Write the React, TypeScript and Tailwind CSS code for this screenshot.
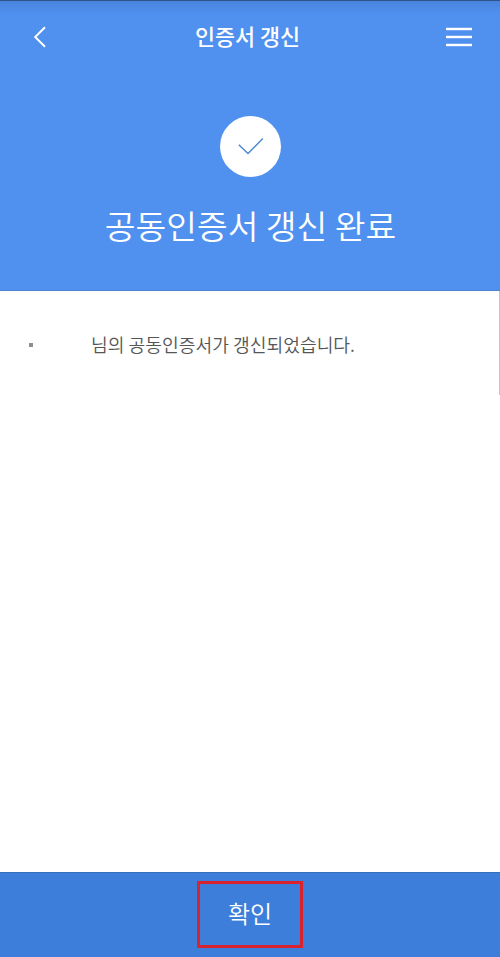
const menuLines = [0, 1, 2]

function Header() {
  return (
    <header className="flex h-[71px] items-center justify-between pr-[28px] pl-[33px]">
      <button type="button" aria-label="뒤로" className="w-[27px]">
        <svg width="14" height="22" viewBox="0 0 14 22" fill="none" stroke="white" strokeWidth="2">
          <path d="M12 1.3 2.2 11 12 20.7" />
        </svg>
      </button>
      <h1 className="mr-[11px] pb-[2px] text-[21.8px] leading-8 font-medium whitespace-nowrap">
        인증서 갱신
      </h1>
      <button type="button" aria-label="메뉴" className="w-[26px]">
        <svg width="26" height="20" viewBox="0 0 26 20" stroke="white" strokeWidth="2.4">
          {menuLines.map((line) => (
            <path key={line} d={`M0 ${2 + line * 8}h26`} />
          ))}
        </svg>
      </button>
    </header>
  )
}

function CheckBadge() {
  return (
    <div className="flex h-[61px] w-[61px] items-center justify-center rounded-full bg-white">
      <svg width="61" height="61" viewBox="0 0 61 61" fill="none" stroke="#4a88d0" strokeWidth="1.4">
        <path d="M18.8 28.7 28 37.6 42.8 22.4" />
      </svg>
    </div>
  )
}

export default function App() {
  return (
    <div className="relative flex h-[957px] w-[500px] flex-col overflow-hidden bg-white font-['Noto_Sans_CJK_KR',sans-serif]">
      <section className="h-[291px] border-t border-b border-t-[#2f5487] border-b-[#4b82cf] bg-[#5091f0] text-white">
        <div className="bg-linear-to-b from-[#4884dc] to-[#5091f0] to-20%">
          <Header />
        </div>
        <div className="flex flex-col items-center pt-[44px]">
          <CheckBadge />
          <h2 className="mt-[23px] ml-px text-[33.4px] leading-[50px] font-[350] whitespace-nowrap">
            공동인증서 갱신 완료
          </h2>
        </div>
      </section>

      <main className="flex-1 pt-[41px] pl-[29px]">
        <p className="flex items-center text-[18.2px] leading-7 font-[350] text-[#555]">
          <span className="mr-[58px] h-[4px] w-[4px] bg-[#8c8c8c]" />
          <span className="-mt-[2px]">님의 공동인증서가 갱신되었습니다.</span>
        </p>
      </main>

      <footer className="flex h-[85px] justify-center border-t border-[#386fbb] bg-[#3d7edb] pt-[8px]">
        <button
          type="button"
          className="flex h-[67px] w-[106px] items-center justify-center border-3 border-[#d9232e] pb-[3px] text-2xl font-[350] text-white"
        >
          확인
        </button>
      </footer>

      {/* 스크롤바 */}
      <div className="absolute top-[291px] right-0 h-[104px] w-px bg-[#b4cbd2]" />
    </div>
  )
}
